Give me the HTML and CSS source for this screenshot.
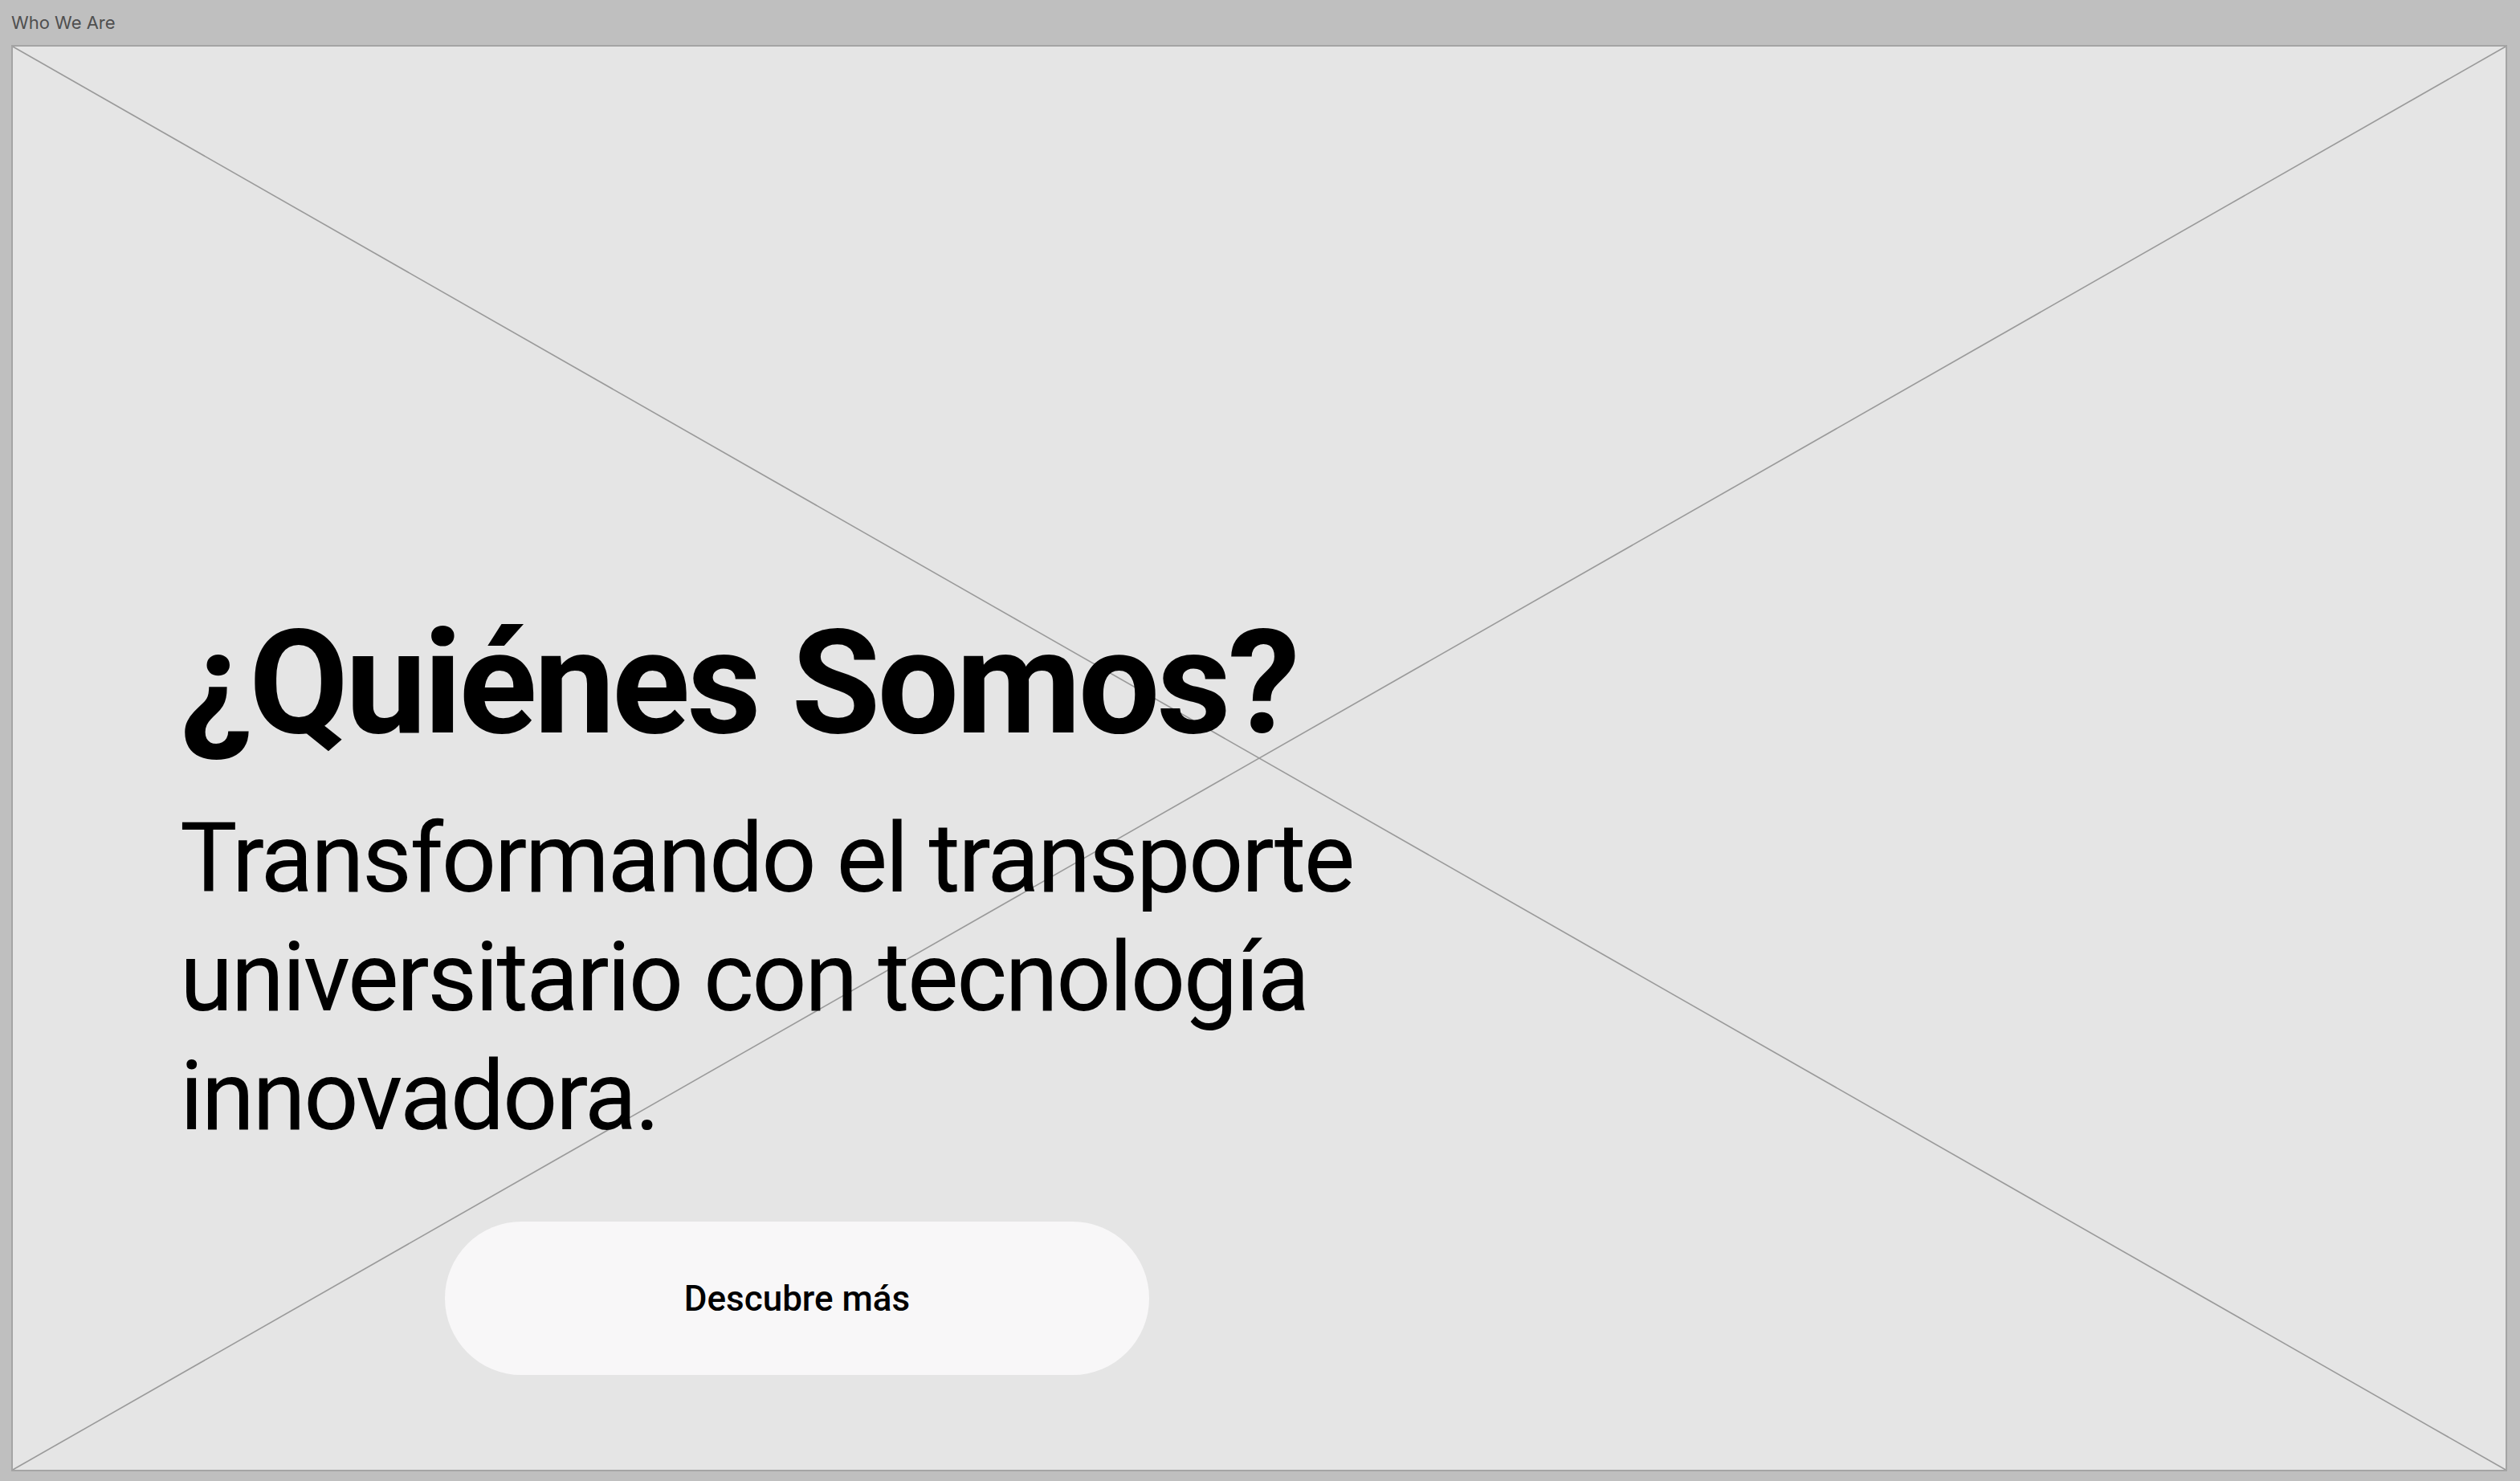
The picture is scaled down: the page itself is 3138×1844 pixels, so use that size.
FILE: index.html
```html
<!DOCTYPE html>
<html lang="es">
<head>
<meta charset="utf-8">
<title>Who We Are</title>
<link rel="stylesheet" href="styles.css">
</head>
<body>
  <div class="frame-label">Who We Are</div>
  <section class="frame">
    <svg class="placeholder" viewBox="0 0 100 100" preserveAspectRatio="none" aria-hidden="true">
      <line x1="0" y1="0" x2="100" y2="100" vector-effect="non-scaling-stroke"/>
      <line x1="100" y1="0" x2="0" y2="100" vector-effect="non-scaling-stroke"/>
    </svg>
    <div class="content">
      <h1 class="title">¿Quiénes Somos?</h1>
      <p class="subtitle">Transformando el transporte universitario con tecnología innovadora.</p>
      <div class="actions">
        <button class="cta">Descubre más</button>
      </div>
    </div>
  </section>
</body>
</html>
```

FILE: styles.css
```css
html, body {
  margin: 0;
  padding: 0;
}
body {
  background: #bfbfbf;
  width: 3138px;
  height: 1844px;
  overflow: hidden;
  font-family: Roboto, "Liberation Sans", sans-serif;
}
.frame-label {
  height: 56px;
  box-sizing: border-box;
  padding: 14px 0 0 14px;
  font-family: Inter, "Liberation Sans", sans-serif;
  font-size: 22px;
  line-height: 28px;
  color: #4f4f4f;
}
.frame {
  position: relative;
  margin: 0 16px 0 14px;
  height: 1776px;
  box-sizing: border-box;
  border: 2px solid #a4a4a4;
  background: #e5e5e5;
}
.placeholder {
  position: absolute;
  inset: 0;
  width: 100%;
  height: 100%;
}
.placeholder line {
  stroke: #9a9a9a;
  stroke-width: 1.6px;
}
.content {
  position: relative;
  display: flex;
  flex-direction: column;
  padding: 687px 0 0 208px;
}
.title {
  margin: 0;
  font-family: Roboto, "Liberation Sans", sans-serif;
  font-weight: 700;
  font-size: 180px;
  line-height: normal;
  color: #000;
  letter-spacing: -3.7px;
}
.subtitle {
  margin: 39px 0 0 0;
  width: 1620px;
  font-weight: 400;
  font-size: 120px;
  line-height: 148px;
  color: #000;
  letter-spacing: -2.5px;
}
.actions {
  margin-top: 82px;
  padding-left: 330px;
  display: flex;
}
.cta {
  width: 877px;
  height: 191px;
  border: none;
  border-radius: 96px;
  background: #f8f7f8;
  color: #000;
  font-family: Roboto, "Liberation Sans", sans-serif;
  font-weight: 500;
  font-size: 44px;
  display: flex;
  align-items: center;
  justify-content: center;
  padding: 0;
}
```
